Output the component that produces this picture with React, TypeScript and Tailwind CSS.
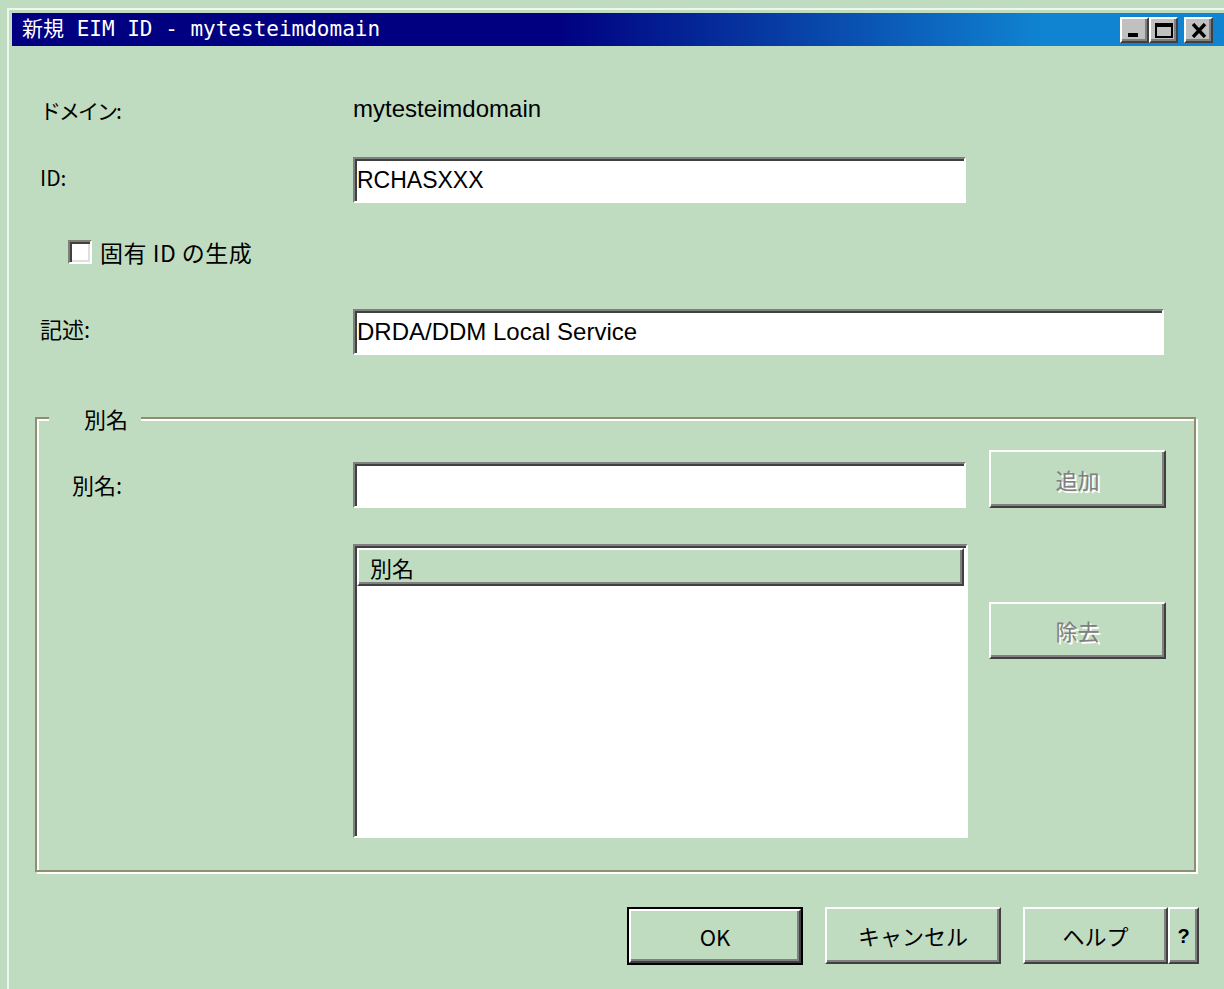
import React from 'react';

const ui = "font-['Noto_Sans_CJK_JP',sans-serif]";
const latin = "font-['Liberation_Sans','Noto_Sans_CJK_JP',sans-serif]";

// classic 3D edges
const raised =
  'border-2 border-t-white border-l-white border-b-[#404040] border-r-[#404040] shadow-[inset_-2px_-2px_0_#808080]';
const sunken =
  'border-2 border-t-[#808080] border-l-[#808080] border-b-white border-r-white shadow-[inset_2px_2px_0_#404040]';

function TitleButton({ children }: { children: React.ReactNode }) {
  return (
    <div className={`relative w-[29px] h-[26px] bg-[#c0c0c0] ${raised}`}>{children}</div>
  );
}

function TextField({ value, width, size = 'text-[23px]' }: { value?: string; width: string; size?: string }) {
  return (
    <div className={`${width} h-[46px] bg-white ${sunken} flex items-center pl-[2px] ${latin} ${size} text-black`}>
      {value}
    </div>
  );
}

function PushButton({
  label,
  width,
  height = 'h-[57px]',
  disabled,
  className = '',
}: {
  label: string;
  width: string;
  height?: string;
  disabled?: boolean;
  className?: string;
}) {
  return (
    <button
      className={`${width} ${height} bg-[#c0dcc0] ${raised} flex items-center justify-center ${ui} text-[22px] ${
        disabled ? 'text-[#808080] [text-shadow:2px_2px_0_#ffffff]' : 'text-black'
      } ${className}`}
    >
      {label}
    </button>
  );
}

export default function App() {
  return (
    <div className="w-[1224px] h-[989px] overflow-hidden bg-[#c0dcc0]">
      <div className="ml-[7px] mt-[8px] w-[1220px] h-[990px] border-l-2 border-t-2 border-[#eef7ee] p-[3px]">
        {/* title bar */}
        <div className="h-[33px] flex items-center justify-between pl-[10px] pr-[11px] bg-[linear-gradient(90deg,#000080_0%,#000080_45%,#1084d0_85%,#1084d0_100%)]">
          <span className="font-['DejaVu_Sans_Mono','Noto_Sans_CJK_JP',monospace] text-[21px] text-white leading-none">
            新規 EIM ID - mytesteimdomain
          </span>
          <div className="flex items-center">
            <TitleButton>
              <div className="absolute left-[6px] top-[14px] w-[10px] h-[4px] bg-black" />
            </TitleButton>
            <TitleButton>
              <div className="absolute left-[4px] top-[4px] w-[18px] h-[15px] border-2 border-t-4 border-black" />
            </TitleButton>
            <div className="w-[6px]" />
            <TitleButton>
              <svg className="absolute left-[5px] top-[4px]" width="16" height="15" viewBox="0 0 16 15">
                <path d="M2 1 L14 14 M14 1 L2 14" stroke="black" strokeWidth="3.4" />
              </svg>
            </TitleButton>
          </div>
        </div>

        {/* dialog body */}
        <div className={`${ui} text-black`}>
          <div className="pl-[28px]">
            <div className="mt-[42px] h-[46px] flex items-center">
              <span className="w-[313px] text-[21px] tracking-[-2px]">ドメイン:</span>
              <span className={`${latin} text-[24px] -mt-[4px]`}>mytesteimdomain</span>
            </div>
            <div className="mt-[23px] h-[46px] flex items-center">
              <span className="w-[313px] text-[21px] -mt-[4px]">ID:</span>
              <TextField value="RCHASXXX" width="w-[613px]" />
            </div>
            <div className="mt-[26px] h-[46px] flex items-center pl-[28px]">
              <div className="w-[24px] h-[24px] bg-white border-2 border-t-[#808070] border-l-[#808070] border-b-white border-r-white shadow-[inset_2px_2px_0_#404040,inset_-2px_-2px_0_#dfdfdf]" />
              <span className="ml-[8px] text-[23px] tracking-[0.5px]">固有 ID の生成</span>
            </div>
            <div className="mt-[34px] h-[46px] flex items-center">
              <span className="w-[313px] text-[22px] -mt-[8px]">記述:</span>
              <TextField value="DRDA/DDM Local Service" width="w-[811px]" size="text-[24px]" />
            </div>
          </div>

          {/* alias group box */}
          <div className="relative ml-[23px] mt-[62px] w-[1161px] h-[455px] border-2 border-[#8e8e70] shadow-[inset_2px_2px_0_#ffffff,2px_2px_0_#ffffff]">
            <span className="absolute left-[12px] -top-[17px] bg-[#c0dcc0] pl-[35px] pr-[13px] text-[22px] leading-[32px]">
              別名
            </span>
            <div className="flex pt-[31px]">
              <div className="w-[316px] pl-[35px] pt-[18px] text-[22px]">別名:</div>
              <div className="w-[615px]">
                <div className="mt-[12px]">
                  <TextField width="w-[613px]" />
                </div>
                <div className={`mt-[36px] h-[294px] bg-white p-[2px] ${sunken} border-t-[#8c8ca8] border-l-[#8c8ca8]`}>
                  <div className={`h-[38px] bg-[#c0dcc0] ${raised} pl-[11px] flex items-center text-[22px]`}>
                    別名
                  </div>
                </div>
              </div>
              <div className="ml-[21px] flex flex-col">
                <PushButton label="追加" width="w-[177px]" height="h-[58px]" disabled />
                <PushButton label="除去" width="w-[177px]" disabled className="mt-[94px]" />
              </div>
            </div>
          </div>

          {/* dialog buttons */}
          <div className="mt-[35px] ml-[615px] flex items-start">
            <div className="border-2 border-black">
              <PushButton label="OK" width="w-[172px]" height="h-[54px]" className={`${latin}`} />
            </div>
            <PushButton label="キャンセル" width="w-[176px]" className="ml-[22px]" />
            <PushButton label="ヘルプ" width="w-[145px]" className="ml-[22px]" />
            <button className={`w-[31px] h-[57px] bg-[#c0dcc0] ${raised} flex items-center justify-center font-['Liberation_Sans',sans-serif] font-bold text-[20px]`}>
              ?
            </button>
          </div>
        </div>
      </div>
    </div>
  );
}
